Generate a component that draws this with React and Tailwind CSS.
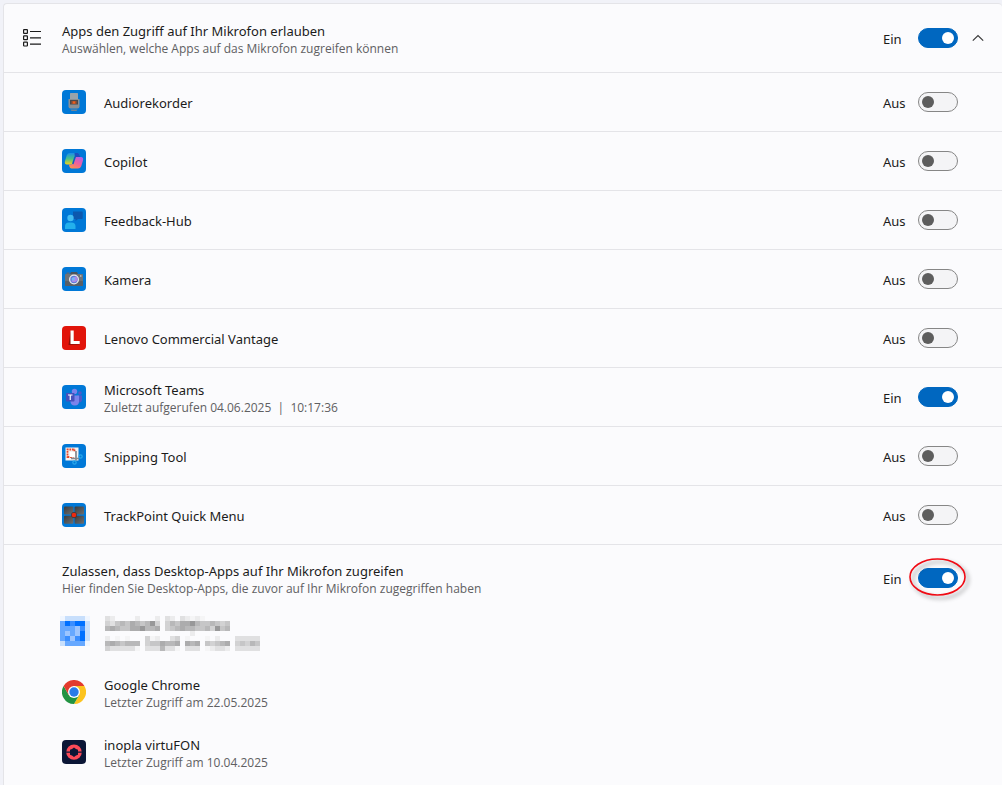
import { useState } from "react";

function Tile({ fill = "#0078d7", children }) {
  return (
    <svg viewBox="0 0 24 24" className="h-6 w-6 shrink-0" aria-hidden="true">
      <rect width="24" height="24" rx="4" fill={fill} />
      {children}
    </svg>
  );
}

function RecorderIcon() {
  return (
    <Tile>
      <rect x="8" y="3" width="8" height="7" rx="0.6" fill="#9aa3aa" />
      <path d="M6.5 9h11v7.500q0 2-2 2h-7q-2 0-2-2z" fill="#8b9094" />
      <rect x="8" y="10" width="8" height="4.500" fill="#474a4e" />
      <rect x="9.500" y="11" width="5" height="3" fill="#a4502c" />
      <rect x="11" y="11.500" width="2" height="2" fill="#f0601c" />
      <path d="M8.500 19.500h7l-1 1.500h-5z" fill="#6f8597" />
    </Tile>
  );
}

function CopilotIcon() {
  return (
    <Tile>
      <defs>
        <linearGradient id="copilotLeft" x1="0.3" y1="0" x2="0.3" y2="1">
          <stop offset="0" stopColor="#1c8fe8" />
          <stop offset="0.5" stopColor="#48c08a" />
          <stop offset="1" stopColor="#f2d21c" />
        </linearGradient>
        <linearGradient id="copilotRight" x1="0.8" y1="0" x2="0.2" y2="1">
          <stop offset="0" stopColor="#b060e8" />
          <stop offset="0.5" stopColor="#f0609c" />
          <stop offset="1" stopColor="#ff9248" />
        </linearGradient>
      </defs>
      <path d="M8 4h7.500q1.600 0 2 1.600L18.200 8h-3.700L11 15.500H5q-2.800 0-2-3.500l1.800-5.700Q5.600 4 8 4z" fill="url(#copilotLeft)" />
      <path d="M12.500 4h3q1.600 0 2 1.600l.7 2.400h-3q-1.700 0-2.200 1.800z" fill="#1a4fc0" />
      <path d="M13.500 8H19q2.800 0 2 3.500l-1.800 5.700q-.8 2.300-3.200 2.300H9.500q-1.500 0-2-1.700L6.900 15.500h2.600q1.300 0 1.700-1.500l1.300-4.600z" fill="url(#copilotRight)" />
      <path d="m10.800 15 2.300-7.200" stroke="#0b5ec4" strokeWidth="1.600" />
    </Tile>
  );
}

function FeedbackIcon() {
  return (
    <Tile>
      <path d="M11 3.500h9q.7 0 .7.700v6q0 .8-.7.800h-4l-2.500 2v-2H11z" fill="#0c58ae" />
      <circle cx="8.500" cy="10" r="3.200" fill="#42bdf2" />
      <path d="M3 21v-2.500q0-4 4-4h2.500q4 0 4 4V21z" fill="#23b0ec" />
    </Tile>
  );
}

function CameraIcon() {
  return (
    <Tile>
      <path d="M9 5h6l1 2H8z" fill="#4d545b" />
      <rect x="4.500" y="5.500" width="3" height="2" fill="#56697c" />
      <rect x="3" y="7" width="18" height="12" rx="0.8" fill="#6c7278" />
      <rect x="3" y="14" width="18" height="5" rx="0.8" fill="#595f66" />
      <circle cx="12" cy="12.500" r="5" fill="#e9e9ee" />
      <circle cx="12" cy="12.500" r="3.700" fill="#5b7ed8" />
      <path d="M9.500 14.500q.4-4.500 4.500-5 2 1 1.700 3.500-1.700 3.300-6.200 1.500z" fill="#b08ae8" />
      <circle cx="11.300" cy="12" r="1.800" fill="#79b8f6" />
      <circle cx="18.800" cy="9" r="0.700" fill="#dfe3e7" />
    </Tile>
  );
}

function LenovoIcon() {
  return (
    <Tile fill="#e1140a">
      <path d="M6.500 19 8.500 5l2 11L18 18.500z" fill="#8e0f08" />
      <path d="M8.500 4.500h3.200v10.500h6V18H8.500z" fill="#fff" />
    </Tile>
  );
}

function TeamsIcon() {
  return (
    <Tile>
      <circle cx="18" cy="8" r="1.800" fill="#5059c9" />
      <path d="M15 10.500h5v4q0 3-3 3h-2z" fill="#5059c9" />
      <circle cx="12.500" cy="6.500" r="2.700" fill="#7b83eb" />
      <path d="M8.500 10.500H17v6q0 4-4.200 4t-4.300-4z" fill="#7b83eb" />
      <rect x="4" y="8" width="8.500" height="8.500" rx="0.700" fill="#4650bc" />
      <path d="M6 10h4.500M8.250 10v5" stroke="#fff" strokeWidth="1.200" />
    </Tile>
  );
}

function SnippingIcon() {
  return (
    <Tile>
      <rect x="3.500" y="3.500" width="13" height="13" fill="#f3f1f0" />
      <path d="M5.500 14V5.500H13M12.500 5.500v4M5.500 13h6" fill="none" stroke="#e4472a" strokeWidth="1.800" strokeDasharray="1.800 0.800" />
      <path d="M8 8h5v5H8z" fill="#fff" />
      <path d="M14 7v9.500M9 14.500h8" stroke="#858a91" strokeWidth="1.700" />
      <circle cx="18.500" cy="12.500" r="1.700" fill="none" stroke="#28a8ea" strokeWidth="1.200" />
      <circle cx="12.500" cy="18.500" r="1.700" fill="none" stroke="#28a8ea" strokeWidth="1.200" />
    </Tile>
  );
}

function TrackPointIcon() {
  return (
    <Tile>
      <defs>
        <linearGradient id="trackKeys" x1="0" y1="0" x2="1" y2="1">
          <stop offset="0" stopColor="#3a3c3e" />
          <stop offset="1" stopColor="#6c6e70" />
        </linearGradient>
      </defs>
      <rect x="2" y="3.500" width="9.400" height="8" rx="1" fill="url(#trackKeys)" />
      <rect x="12.600" y="3.500" width="9.400" height="8" rx="1" fill="url(#trackKeys)" />
      <rect x="2" y="12.700" width="9.400" height="8" rx="1" fill="url(#trackKeys)" />
      <rect x="12.600" y="12.700" width="9.400" height="8" rx="1" fill="url(#trackKeys)" />
      <circle cx="12" cy="12" r="2.900" fill="#443236" />
      <circle cx="12" cy="12" r="2.300" fill="#ee2a10" />
    </Tile>
  );
}

function ChromeIcon() {
  return (
    <svg viewBox="0 0 24 24" className="h-6 w-6 shrink-0" aria-hidden="true">
      <path d="M12 6h10.400A12 12 0 0 1 12 24l5.200-9z" fill="#fcc31e" />
      <path d="M1.600 6A12 12 0 0 0 12 24l5.200-9L12 12 6.800 15z" fill="#229342" />
      <path d="M1.600 6A12 12 0 0 1 22.400 6H12l-5.200 9z" fill="#e33b2e" />
      <circle cx="12" cy="12" r="6" fill="#fff" />
      <circle cx="12" cy="12" r="4.700" fill="#2a7be9" />
    </svg>
  );
}

function InoplaIcon() {
  return (
    <Tile fill="#0b1636">
      <ellipse cx="12" cy="12.200" rx="7.800" ry="7.600" fill="#fb4a58" />
      <path d="M12 7.500 14 9l2 .8v5L14 15.500l-2 1.500-2-1.500-2-.7v-5L10 9z" fill="#0b1636" />
      <path d="M4 12.200h5M15 12.200h5" stroke="#0b1636" strokeWidth="1.200" />
    </Tile>
  );
}

// One cell per character: a-h run from almost white to dark grey, 1-6 from pale to full blue
const SHADES = {
  a: "#f5f5f6",
  b: "#ececed",
  c: "#e0e0e1",
  d: "#d2d2d3",
  e: "#c6c6c7",
  f: "#b8b8b9",
  g: "#acacad",
  h: "#989899",
  1: "#f0f6ff",
  2: "#c8dffc",
  3: "#9cc5ff",
  4: "#66a8ff",
  5: "#3a8eff",
  6: "#0070ff",
};

const NAME_CELLS = [
  "cb....b...b.cb.cbaba.....",
  "dcefegfefhd.dfegghfeefede",
  "fgfeegghffg.defgffeefdhef",
  ".................b.......",
];

const DATE_CELLS = [
  "b.a.a...dab..cd.a...a.b...ccccc",
  "fgfefff.deegffg.gfg.edefg.dedfe",
  "dccccca.cccfcca.ccc.abccb.ccccc",
];

const LOGO_CELLS = ["122221", "465662", "444352", "434362", "453562", "244441"];

function Mosaic({ cells, className }) {
  const width = cells[0].length * 5;
  const height = cells.length * 5;
  return (
    <svg
      viewBox={`0 0 ${width} ${height}`}
      width={width}
      height={height}
      shapeRendering="crispEdges"
      className={className}
      aria-hidden="true"
    >
      {cells.map((row, y) =>
        row.split("").map((cell, x) =>
          SHADES[cell] ? (
            <rect key={`${x}-${y}`} x={x * 5} y={y * 5} width="5" height="5" fill={SHADES[cell]} />
          ) : null
        )
      )}
    </svg>
  );
}

function Toggle({ name, initial = false, marked = false }) {
  const [on, setOn] = useState(initial);
  return (
    <label className="flex shrink-0 items-center text-[13px] leading-5">
      <span className="w-[35px] pt-[2px]">{on ? "Ein" : "Aus"}</span>
      <span className="relative flex">
        <input
          type="checkbox"
          role="switch"
          aria-label={name}
          checked={on}
          onChange={(e) => setOn(e.target.checked)}
          className="flex h-5 w-10 appearance-none items-center rounded-full border border-[#868686] bg-[#f4f4f6] px-[3px] before:h-3 before:w-3 before:rounded-full before:bg-[#5d5d5d] checked:justify-end checked:border-[#0067c0] checked:bg-[#0067c0] checked:before:bg-white"
        />
        {marked && (
          <svg
            viewBox="0 0 64 46"
            className="pointer-events-none absolute -left-3 -top-3 h-[46px] w-16 max-w-none drop-shadow-[3px_3px_2px_rgba(0,0,0,0.4)]"
            aria-hidden="true"
          >
            <ellipse cx="31.500" cy="21" rx="27.500" ry="18" fill="none" stroke="#f00a14" strokeWidth="1.600" />
          </svg>
        )}
      </span>
    </label>
  );
}

function Caption({ title, detail }) {
  return (
    <div className="min-w-0 flex-1 pt-[2px]">
      <p className="text-[13px] leading-5 text-[#1b1b1b]">{title}</p>
      {detail && (
        <p className="whitespace-pre font-['Open_Sans',sans-serif] text-[12px] leading-4 text-[#606062]">{detail}</p>
      )}
    </div>
  );
}

const apps = [
  { name: "Audiorekorder", Icon: RecorderIcon },
  { name: "Copilot", Icon: CopilotIcon },
  { name: "Feedback-Hub", Icon: FeedbackIcon },
  { name: "Kamera", Icon: CameraIcon },
  { name: "Lenovo Commercial Vantage", Icon: LenovoIcon },
  { name: "Microsoft Teams", Icon: TeamsIcon, on: true, detail: "Zuletzt aufgerufen 04.06.2025  |  10:17:36" },
  { name: "Snipping Tool", Icon: SnippingIcon },
  { name: "TrackPoint Quick Menu", Icon: TrackPointIcon },
];

const desktopApps = [
  { name: "Google Chrome", Icon: ChromeIcon, detail: "Letzter Zugriff am 22.05.2025" },
  { name: "inopla virtuFON", Icon: InoplaIcon, detail: "Letzter Zugriff am 10.04.2025" },
];

export default function App() {
  const [open, setOpen] = useState(true);

  return (
    <main className="min-h-screen bg-[#f1f2f8] pl-[3px] pt-[3px] font-['Noto_Sans',sans-serif] text-[#1b1b1b]">
      <section className="min-h-[calc(100vh-3px)] rounded-t border-l border-t border-[#e4e4e8] bg-[#fbfbfd]">
        <header className="flex h-[68px] items-center pl-[19px] pr-[14px]">
          <svg
            viewBox="0 0 18 18"
            className="mr-[21px] h-[18px] w-[18px] shrink-0"
            fill="none"
            stroke="#1b1b1b"
            strokeWidth="1.200"
            aria-hidden="true"
          >
            <rect x="0.600" y="0.600" width="3.800" height="3.800" rx="0.500" />
            <rect x="0.600" y="6.900" width="3.800" height="3.800" rx="0.500" />
            <rect x="0.600" y="13.200" width="3.800" height="3.800" rx="0.500" />
            <path d="M7 2.500h11M7 8.800h11M7 15.100h11" />
          </svg>
          <Caption
            title="Apps den Zugriff auf Ihr Mikrofon erlauben"
            detail="Auswählen, welche Apps auf das Mikrofon zugreifen können"
          />
          <Toggle name="Apps den Zugriff auf Ihr Mikrofon erlauben" initial />
          <button
            type="button"
            aria-label="Bereich ein- oder ausblenden"
            aria-expanded={open}
            onClick={() => setOpen(!open)}
            className="ml-[10px] flex h-5 w-5 items-center justify-center"
          >
            <svg viewBox="0 0 12 8" className="h-2 w-3" fill="none" stroke="#3a3a3a" strokeWidth="1.200" aria-hidden="true">
              <path d="M0.800 6.700 6 1.500l5.200 5.200" />
            </svg>
          </button>
        </header>

        {open && (
          <>
            <ul>
              {apps.map(({ name, Icon, on, detail }) => (
                <li key={name} className="flex h-[59px] items-center gap-[18px] border-t border-[#e4e4e8] pl-[58px] pr-11">
                  <Icon />
                  <Caption title={name} detail={detail} />
                  <Toggle name={name} initial={on} />
                </li>
              ))}
            </ul>

            <div className="flex items-center border-t border-[#e4e4e8] pb-[5px] pl-[58px] pr-11 pt-[14px]">
              <Caption
                title="Zulassen, dass Desktop-Apps auf Ihr Mikrofon zugreifen"
                detail="Hier finden Sie Desktop-Apps, die zuvor auf Ihr Mikrofon zugegriffen haben"
              />
              <Toggle name="Zulassen, dass Desktop-Apps auf Ihr Mikrofon zugreifen" initial marked />
            </div>
            <ul>
              <li className="flex h-[60px] items-start gap-[15px] pl-14 pt-[14px]">
                <Mosaic cells={LOGO_CELLS} />
                <div>
                  <Mosaic cells={NAME_CELLS} className="block" />
                  <Mosaic cells={DATE_CELLS} className="block" />
                </div>
              </li>
              {desktopApps.map(({ name, Icon, detail }) => (
                <li key={name} className="flex h-[60px] items-center gap-[18px] pl-[58px] pr-11">
                  <Icon />
                  <Caption title={name} detail={detail} />
                </li>
              ))}
            </ul>
          </>
        )}
      </section>
    </main>
  );
}
